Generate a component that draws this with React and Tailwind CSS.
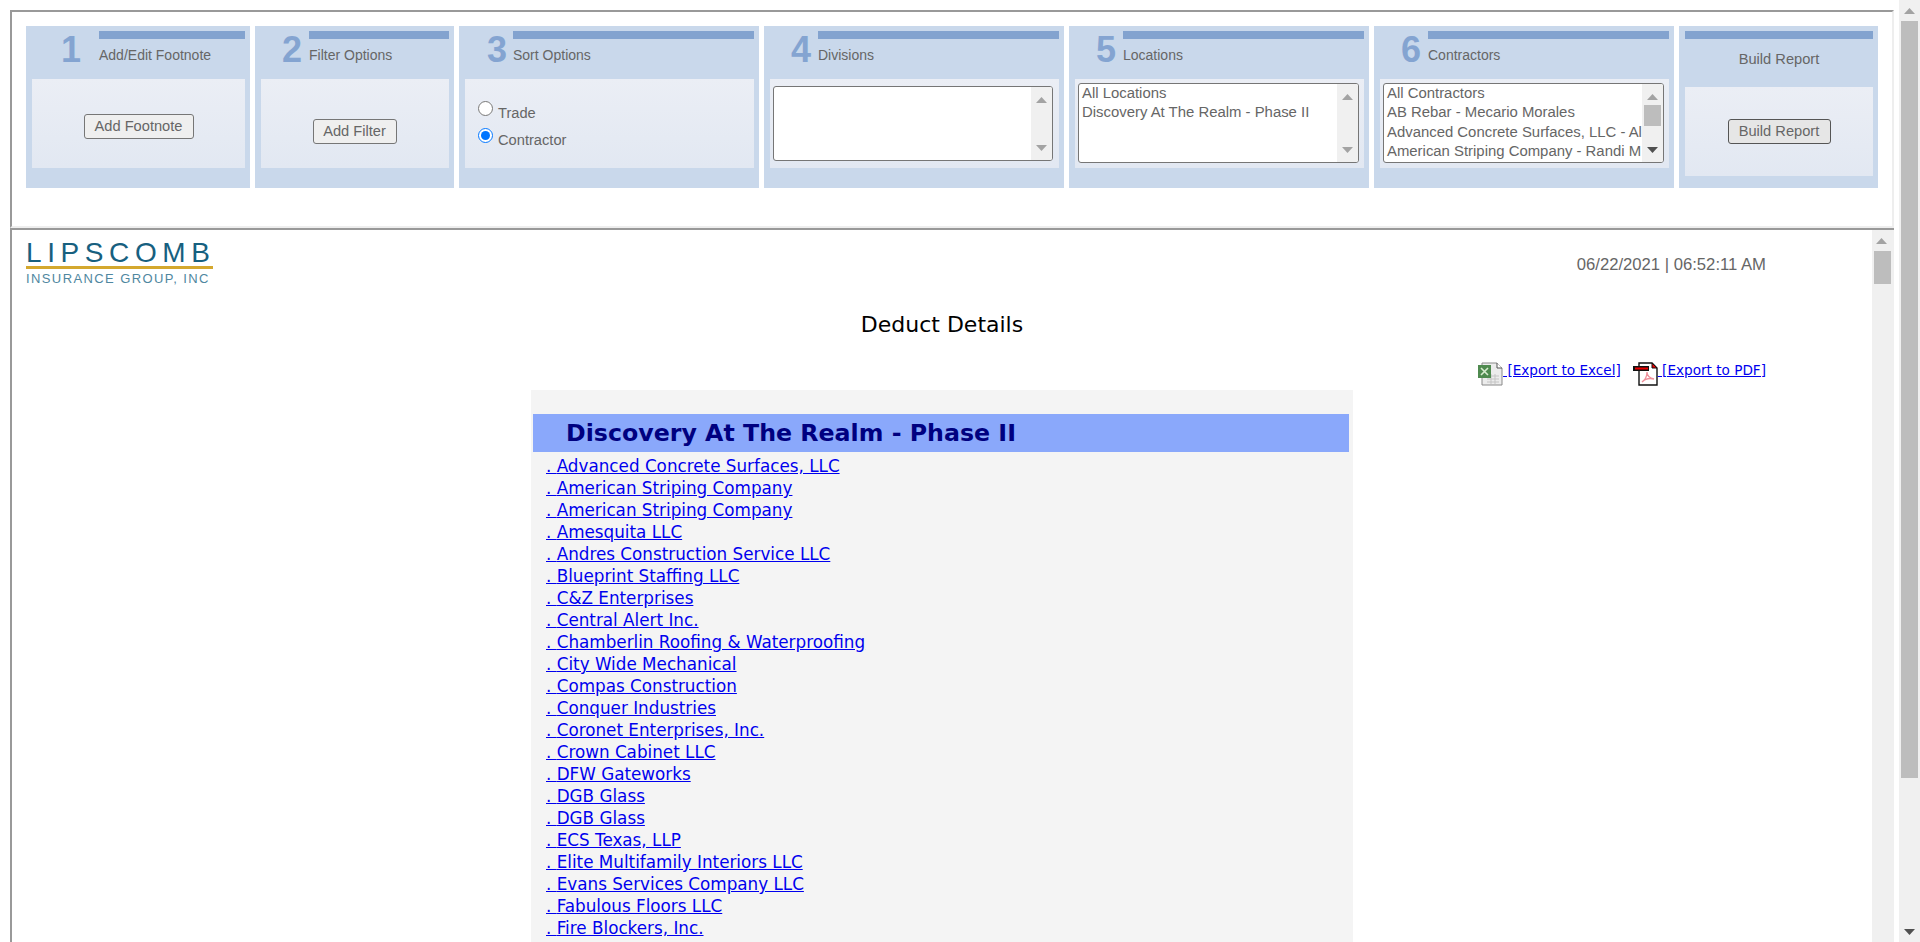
const contractors = [
  'Advanced Concrete Surfaces, LLC', 'American Striping Company', 'American Striping Company', 'Amesquita LLC',
  'Andres Construction Service LLC', 'Blueprint Staffing LLC', 'C&Z Enterprises', 'Central Alert Inc.',
  'Chamberlin Roofing & Waterproofing', 'City Wide Mechanical', 'Compas Construction', 'Conquer Industries',
  'Coronet Enterprises, Inc.', 'Crown Cabinet LLC', 'DFW Gateworks', 'DGB Glass', 'DGB Glass', 'ECS Texas, LLP',
  'Elite Multifamily Interiors LLC', 'Evans Services Company LLC', 'Fabulous Floors LLC', 'Fire Blockers, Inc.',
];

const Arrow = ({ down, dark, className = '' }) => (
  <svg width="11" height="6" viewBox="0 0 11 6" className={className}>
    <polygon points={down ? '0,0 11,0 5.5,6' : '0,6 11,6 5.5,0'} fill={dark ? '#505050' : '#a3a3a3'} />
  </svg>
);

function ListBox({ options, thumb, wide }) {
  return (
    <div className={`${wide ? 'w-[281px] h-[80px]' : 'w-[280px] h-[75px]'} flex bg-white border border-[#767676] rounded-[3px] overflow-hidden`}>
      <div className="flex-1 min-w-0 pl-[3px] text-[14.9px] leading-[19.3px] text-[#666] whitespace-nowrap overflow-hidden">
        {options.map((o) => <div key={o}>{o}</div>)}
      </div>
      <div className="w-[21px] shrink-0 bg-[#f0f0f0] flex flex-col items-center pt-[10px] relative">
        <Arrow />
        {thumb && <div className="w-[17px] h-[21px] bg-[#bdbdbd] mt-[5px]" />}
        <Arrow down dark={thumb} className="mt-auto mb-[9px]" />
      </div>
    </div>
  );
}

function Panel({ num, title, width, col, numPad, children }) {
  return (
    <div className="h-[162px] bg-[#c9d8eb] pl-[6px] pr-[5px] pt-[5px] shrink-0" style={{ width }}>
      <div className="h-[48px] flex">
        <div className="shrink-0 flex justify-end -ml-[6px] pt-px text-[36px] leading-[36px] font-bold text-[#84a4d1]" style={{ width: col, paddingRight: numPad }}>{num}</div>
        <div className="flex-1 min-w-0">
          <div className="h-[8px] bg-[#83a3cf]" />
          <div className="mt-[6px] text-[14px] leading-5 text-[#666]">{title}</div>
        </div>
      </div>
      <div className="h-[89px] bg-gradient-to-b from-[#ebeef5] to-[#e2e8f2]">{children}</div>
    </div>
  );
}

const Btn = ({ children, className = '' }) => (
  <button className={`h-[25px] text-[14.67px] leading-none text-[#666] border rounded-[3px] ${className}`}>{children}</button>
);

function ExcelIcon() {
  return (
    <svg width="25" height="24" viewBox="0 0 25 24" className="inline align-[-11px]">
      <path d="M4 1h15l5 5v17H4z" fill="#ececec" stroke="#8a8a8a" />
      <path d="M19 1v5h5" fill="#fff" stroke="#555" />
      <path d="M9 14h12M9 17h12M9 20h12M13 12v10M17 12v10" stroke="#c4c4c4" />
      <rect x="0" y="3" width="13" height="13" fill="#4f8a4f" />
      <path d="M3 6l7 7M10 6l-7 7" stroke="#d8ecd0" strokeWidth="1.6" />
    </svg>
  );
}

function PdfIcon() {
  return (
    <svg width="25" height="24" viewBox="0 0 25 24" className="inline align-[-11px]">
      <path d="M6 1h13l5 5v17H6z" fill="#fff" stroke="#111" strokeWidth="1.4" />
      <path d="M19 1l5 5h-5z" fill="#e00" stroke="#111" />
      <rect x="0" y="4" width="16" height="5" fill="#111" />
      <rect x="2" y="5.5" width="13" height="2" fill="#e00" />
      <path d="M9 20c3-2 5-6 5-10 0 4 2 6 7 7-4-1-9 0-12 3z" fill="none" stroke="#ef8f9a" strokeWidth="1.3" />
    </svg>
  );
}

function Logo() {
  return (
    <div className="w-[187px]">
      <div className="h-[23px] text-[28px] leading-[19px] tracking-[5.6px] text-[#17607f] whitespace-nowrap">LIPSCOMB</div>
      <div className="h-[3px] bg-[#d4a82e]" />
      <div className="mt-[4px] text-[13px] leading-[12px] tracking-[1.4px] text-[#4f87a0] whitespace-nowrap">INSURANCE GROUP, INC</div>
    </div>
  );
}

export default function App() {
  return (
    <div className="h-[942px] overflow-hidden flex bg-white" style={{ fontFamily: '"Liberation Sans", Arial, sans-serif' }}>
      <div className="w-[1899px] shrink-0 pl-[10px] pt-[10px] pr-[5px] flex flex-col">
        {/* top filter frame */}
        <div className="h-[218px] shrink-0 border-t-2 border-l-2 border-t-[#999] border-l-[#999] border-r-2 border-r-[#eee] border-b-2 border-b-[#eee] pl-[14px] pt-[14px]">
          <div className="flex gap-[5px]">
            <Panel num="1" title="Add/Edit Footnote" width={224} col={73} numPad={18}>
              <div className="flex justify-center pt-[35px]"><Btn className="w-[110px] bg-[#efefef] border-[#767676]">Add Footnote</Btn></div>
            </Panel>
            <Panel num="2" title="Filter Options" width={199} col={54} numPad={7}>
              <div className="flex justify-center pt-[40px] pr-[1px]"><Btn className="w-[84px] bg-[#efefef] border-[#767676]">Add Filter</Btn></div>
            </Panel>
            <Panel num="3" title="Sort Options" width={300} col={54} numPad={6}>
              <div className="pl-[13px] pt-[20px] text-[14.67px] text-[#666]">
                <label className="h-[27px] flex items-center gap-[5px]"><input type="radio" name="sort" className="w-[15px] h-[15px] m-0 -mt-[8px]" />Trade</label>
                <label className="h-[27px] flex items-center gap-[5px]"><input type="radio" name="sort" defaultChecked className="w-[15px] h-[15px] m-0 -mt-[8px]" />Contractor</label>
              </div>
            </Panel>
            <Panel num="4" title="Divisions" width={300} col={54} numPad={7}>
              <div className="pl-[3px] pt-[7px]"><ListBox options={[]} /></div>
            </Panel>
            <Panel num="5" title="Locations" width={300} col={54} numPad={7}>
              <div className="pl-[3px] pt-[4px]"><ListBox wide options={['All Locations', 'Discovery At The Realm - Phase II']} /></div>
            </Panel>
            <Panel num="6" title="Contractors" width={300} col={54} numPad={7}>
              <div className="pl-[3px] pt-[4px]">
                <ListBox wide thumb options={['All Contractors', 'AB Rebar - Mecario Morales', 'Advanced Concrete Surfaces, LLC - Al', 'American Striping Company - Randi M']} />
              </div>
            </Panel>
            <div className="w-[199px] h-[162px] shrink-0 bg-[#c9d8eb] pl-[6px] pr-[5px] pt-[5px]">
              <div className="h-[8px] bg-[#83a3cf]" />
              <div className="h-[48px] pb-[8px] flex items-center justify-center text-[14.67px] text-[#666]">Build Report</div>
              <div className="h-[89px] bg-gradient-to-b from-[#ebeef5] to-[#e2e8f2] flex justify-center pt-[32px]">
                <Btn className="w-[103px] bg-[#e6e6e6] border-[#555]">Build Report</Btn>
              </div>
            </div>
          </div>
        </div>

        {/* report frame */}
        <div className="flex-1 min-h-0 flex border-t-2 border-l-2 border-[#999]">
          <div className="flex-1 min-w-0">
            <div className="flex justify-between pl-[14px] pr-[106px] pt-[13px] h-[62px]">
              <Logo />
              <div className="pt-[12px] text-[16.67px] leading-5 text-[#666]">06/22/2021 | 06:52:11 AM</div>
            </div>
            <div className="mt-[19px] text-center text-[22px] leading-7 text-black w-[1860px]" style={{ fontFamily: '"DejaVu Sans", Verdana, sans-serif' }}>Deduct Details</div>

            <div className="mt-[19px] h-[32px] pr-[106px] text-right text-[13.6px] leading-[24px] whitespace-nowrap" style={{ fontFamily: '"DejaVu Sans", Verdana, sans-serif' }}>
              <a href="#" className="text-[#0000ee] underline"><ExcelIcon /> [Export to Excel]</a>
              <a href="#" className="text-[#0000ee] underline ml-[12px]"><PdfIcon /> [Export to PDF]</a>
            </div>

            <div className="ml-[519px] w-[822px] bg-[#f4f4f4] pt-[24px] pb-[20px]" style={{ fontFamily: '"DejaVu Sans", Verdana, sans-serif' }}>
              <div className="ml-[2px] w-[816px] h-[38px] bg-[#8aa8fb] pl-[33px] pt-[2px] flex items-center text-[23.7px] font-bold text-[#000080]">Discovery At The Realm - Phase II</div>
              <div className="pl-[15px] pt-[3px]">
                {contractors.map((c, i) => (
                  <div key={i} className="h-[22px] text-[16.8px] leading-[22px]"><a href="#" className="text-[#0000ee] underline">. {c}</a></div>
                ))}
              </div>
            </div>
          </div>
          <div className="w-[22px] shrink-0 bg-[#f0f0f0]">
            <div className="h-[21px] flex items-center justify-center pr-[3px]"><Arrow /></div>
            <div className="ml-[2px] w-[17px] h-[33px] bg-[#bdbdbd]" />
          </div>
        </div>
      </div>

      {/* page scrollbar */}
      <div className="w-[21px] shrink-0 bg-[#f0f0f0] flex flex-col">
        <div className="h-[21px] flex items-center justify-center"><Arrow /></div>
        <div className="ml-[2px] w-[17px] h-[757px] bg-[#bdbdbd]" />
        <div className="mt-auto h-[21px] flex items-center justify-center"><Arrow down dark /></div>
      </div>
    </div>
  );
}
